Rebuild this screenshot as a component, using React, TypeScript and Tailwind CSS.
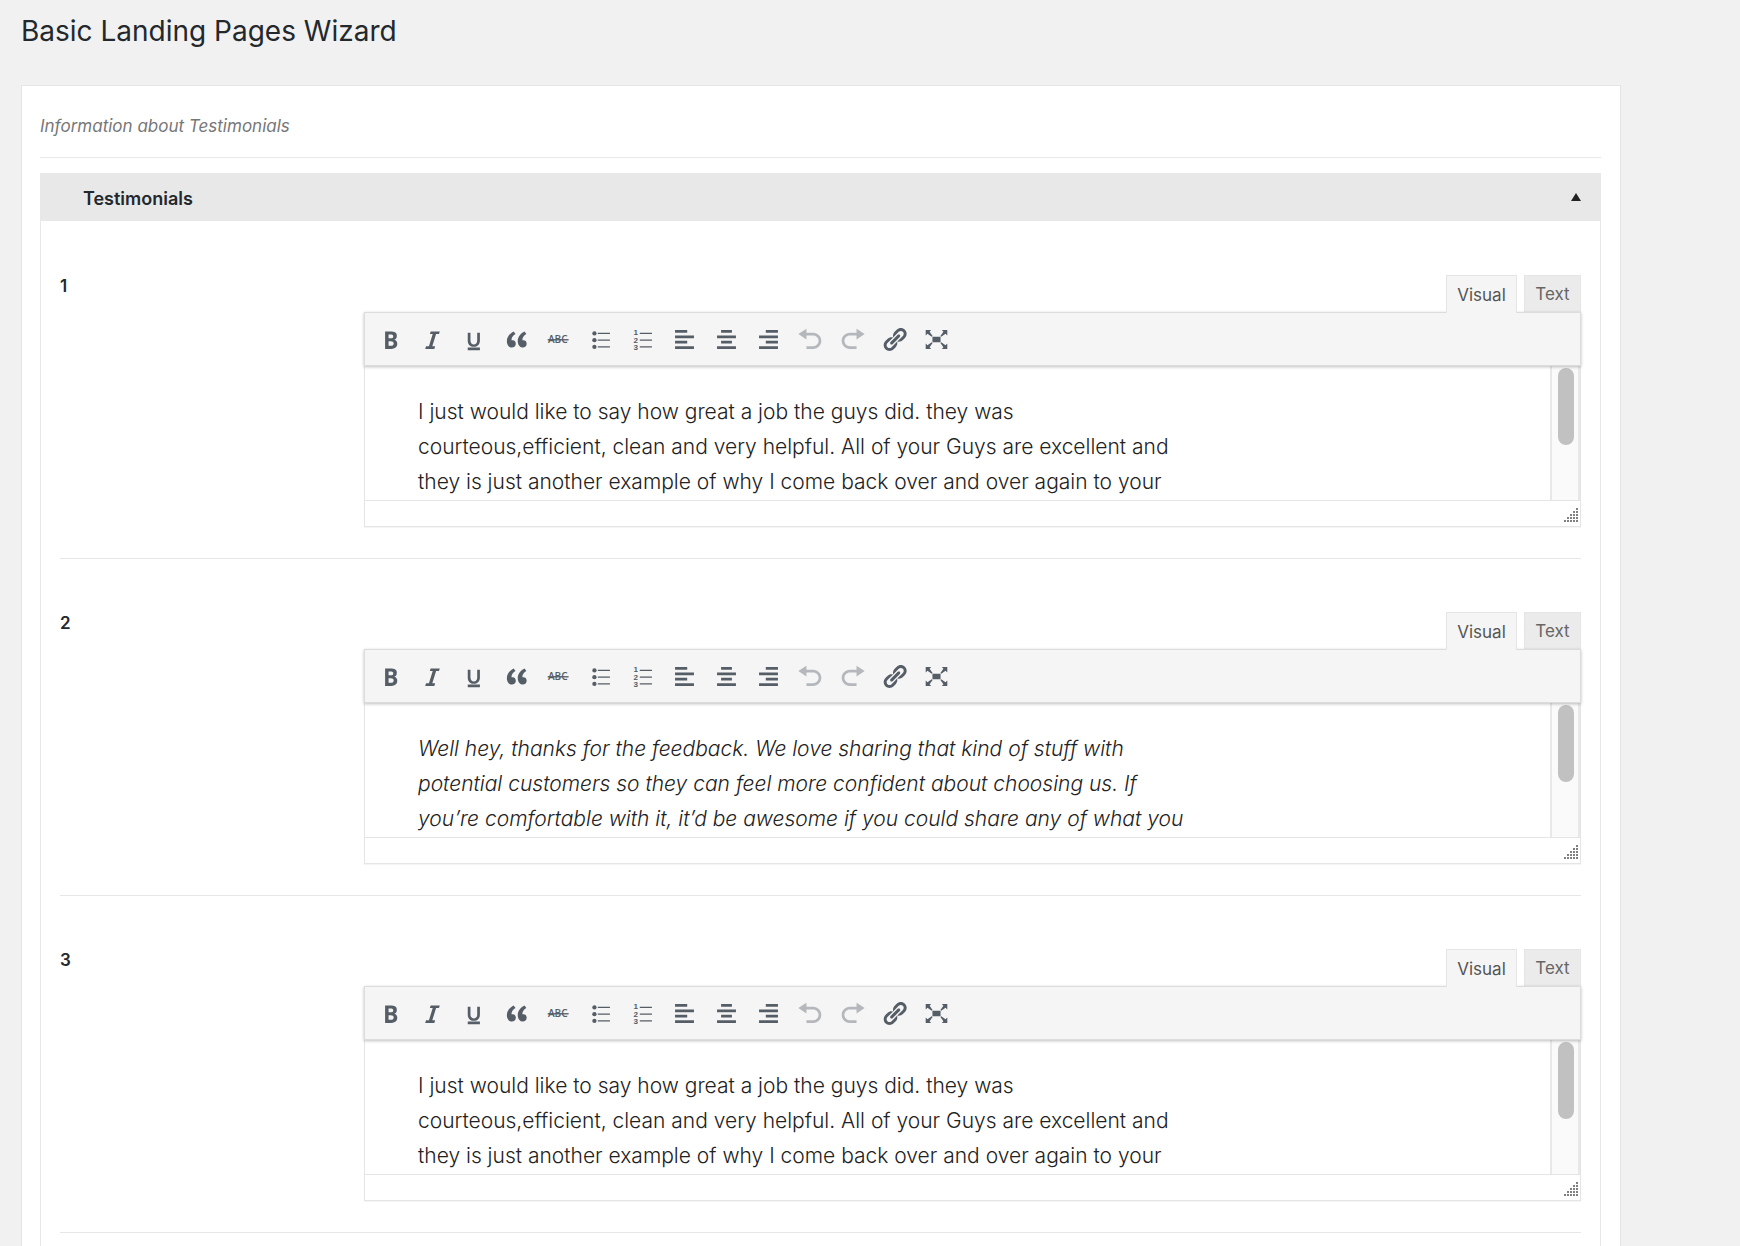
import React from "react";

function Icon({ children }: { children: React.ReactNode }) {
  return (
    <svg viewBox="0 0 20 20" className="h-[27px] w-[27px] fill-current" aria-hidden="true">
      {children}
    </svg>
  );
}

const tools: { label: string; disabled?: boolean; icon: React.ReactNode }[] = [
  {
    label: "Bold",
    icon: <path d="M6 4v13h4.54c1.37 0 2.46-.33 3.26-1 .8-.66 1.2-1.58 1.2-2.77 0-.84-.17-1.51-.51-2.01s-.9-.85-1.67-1.03v-.09c.57-.1 1.02-.4 1.36-.9s.51-1.13.51-1.91c0-1.14-.39-1.98-1.17-2.5C12.75 4.26 11.5 4 9.78 4H6zm2.57 5.15V6.26h1.36c.73 0 1.27.11 1.61.32.34.22.51.58.51 1.07 0 .54-.16.92-.47 1.15s-.82.35-1.51.35h-1.5zm0 2.19h1.6c1.44 0 2.16.53 2.16 1.61 0 .6-.17 1.05-.51 1.34s-.86.43-1.57.43H8.57v-3.38z" />,
  },
  { label: "Italic", icon: <path d="M14.78 6h-2.13l-2.8 9h2.12l-.62 2H4.6l.62-2h2.14l2.8-9H8.03l.62-2h6.75z" /> },
  {
    label: "Underline",
    icon: <path d="M14 5h-2v5.71c0 1.99-1.12 2.98-2.45 2.98-1.32 0-2.55-1-2.55-2.96V5H5v5.87c0 1.91 1 4.54 4.48 4.54 3.49 0 4.52-2.58 4.52-4.5V5zm0 13v-2H5v2h9z" />,
  },
  {
    label: "Blockquote",
    icon: <path d="M9.49 13.22c0-.74-.2-1.38-.61-1.9-.62-.78-1.83-.88-2.53-.72-.29-1.65 1.11-3.75 2.92-4.65L7.88 4c-2.73 1.3-5.42 4.28-4.96 8.05C3.21 14.43 4.59 16 6.54 16c.85 0 1.56-.25 2.12-.75s.83-1.18.83-2.03zm8.05 0c0-.74-.2-1.38-.61-1.9-.63-.78-1.83-.88-2.53-.72-.29-1.65 1.11-3.75 2.92-4.65L15.93 4c-2.73 1.3-5.41 4.28-4.95 8.05.29 2.38 1.66 3.95 3.61 3.95.85 0 1.56-.25 2.12-.75s.83-1.18.83-2.03z" />,
  },
  {
    label: "Strikethrough",
    icon: (
      <>
        <text x="9.500" y="12.900" textAnchor="middle" fontSize="7.500" fontWeight="600" fontFamily="Open Sans, sans-serif">ABC</text>
        <path d="M2 9.700h15.500v1H2z" />
      </>
    ),
  },
  {
    label: "Bulleted list",
    icon: (
      <>
        <circle cx="5.500" cy="5.500" r="1.600" />
        <circle cx="5.500" cy="10.500" r="1.600" />
        <circle cx="5.500" cy="15.500" r="1.600" />
        <path d="M8 5h9v1H8zM8 10h9v1H8zM8 15h9v1H8z" />
      </>
    ),
  },
  {
    label: "Numbered list",
    icon: (
      <>
        <g fontSize="6" fontWeight="600" fontFamily="Liberation Sans, sans-serif">
          <text x="3.300" y="7">1</text>
          <text x="3.300" y="12.300">2</text>
          <text x="3.300" y="17.600">3</text>
        </g>
        <path d="M8 5h9v1H8zM8 10h9v1H8zM8 15h9v1H8z" />
      </>
    ),
  },
  { label: "Align left", icon: <path d="M12 5V3H3v2h9zm5 4V7H3v2h14zm-5 4v-2H3v2h9zm5 4v-2H3v2h14z" /> },
  { label: "Align center", icon: <path d="M14 5V3H6v2h8zm3 4V7H3v2h14zm-3 4v-2H6v2h8zm3 4v-2H3v2h14z" /> },
  { label: "Align right", icon: <path d="M17 5V3H8v2h9zm0 4V7H3v2h14zm0 4v-2H8v2h9zm0 4v-2H3v2h14z" /> },
  {
    label: "Undo",
    disabled: true,
    icon: <path d="M12 5H7V2L1 6l6 4V7h5c2.2 0 4 1.8 4 4s-1.8 4-4 4H7v2h5c3.3 0 6-2.7 6-6s-2.7-6-6-6z" />,
  },
  {
    label: "Redo",
    disabled: true,
    icon: <path d="M8 5h5V2l6 4-6 4V7H8c-2.2 0-4 1.8-4 4s1.8 4 4 4h5v2H8c-3.3 0-6-2.7-6-6s2.7-6 6-6z" />,
  },
  {
    label: "Insert link",
    icon: <path d="M17.74 2.76c1.68 1.69 1.68 4.41 0 6.1l-1.53 1.52c-1.12 1.12-2.7 1.47-4.14 1.09l2.62-2.61.76-.77.76-.76c.84-.84.84-2.2 0-3.04-.84-.85-2.2-.85-3.04 0l-.77.76-3.38 3.38c-.37-1.44-.02-3.02 1.1-4.14l1.52-1.53c1.69-1.68 4.42-1.68 6.1 0zM8.59 13.43l5.34-5.34c.42-.42.42-1.1 0-1.52-.44-.43-1.13-.39-1.53 0l-5.33 5.34c-.42.42-.42 1.1 0 1.52.44.43 1.13.39 1.52 0zm-.76 2.29l4.14-4.15c.38 1.44.03 3.02-1.09 4.14l-1.52 1.53c-1.69 1.68-4.41 1.68-6.1 0-1.68-1.68-1.68-4.42 0-6.1l1.53-1.52c1.12-1.12 2.7-1.47 4.14-1.1l-4.14 4.15c-.85.84-.85 2.2 0 3.05.84.84 2.2.84 3.04 0z" />,
  },
  {
    label: "Fullscreen",
    icon: (
      <>
        <path d="M7 8h6v4H7zM2 3h4L4.900 4.200 7.100 7.400 6.500 8 3.300 5.800 2 7zM18 3h-4l1.100 1.200L12.900 7.400l.6.6 3.200-2.200L18 7zM2 17h4l-1.100-1.200L7.100 12.600l-.6-.6-3.200 2.200L2 13zM18 17h-4l1.100-1.200-2.200-3.200.6-.6 3.200 2.200L18 13z" />
      </>
    ),
  },
];

function ResizeHandle() {
  const dots: [number, number][] = [];
  for (let row = 0; row < 5; row++) {
    for (let col = 4 - row; col < 5; col++) dots.push([col, row]);
  }
  return (
    <svg viewBox="0 0 14 14" className="h-[14px] w-[14px] fill-[#808080]" aria-hidden="true">
      {dots.map(([c, r]) => (
        <rect key={`${c}-${r}`} x={c * 3} y={r * 3} width="2" height="2" />
      ))}
    </svg>
  );
}

function Editor({ number, italic, children }: { number: number; italic?: boolean; children: React.ReactNode }) {
  return (
    <section className="flex border-b border-[#e7e7e7] pt-[53px] pb-[31px]">
      <h3 id={`item-${number}`} className="w-[304px] shrink-0 text-[17px] leading-[22px] font-semibold">
        {number}
      </h3>
      <div className="min-w-0 flex-1">
        <div className="flex items-start justify-end gap-[7px] text-[17px] leading-6">
          <button className="relative z-10 -mb-px h-[38px] w-[71px] border border-b-0 border-[#e5e5e5] bg-[#f5f5f5] text-[#555]">
            Visual
          </button>
          <button className="h-[37px] w-[57px] border border-b-0 border-[#e5e5e5] bg-[#ebebeb] text-[#666]">Text</button>
        </div>
        <div className="border border-[#e5e5e5] shadow-[0_1px_1px_rgba(0,0,0,0.04)]">
          <div
            role="toolbar"
            aria-label="Formatting"
            className="relative -mx-px -mt-px flex h-[54px] items-center border border-[#dcdcdc] bg-[#f5f5f5] px-1 text-[#555d66] shadow-[0_1px_3px_rgba(0,0,0,0.25)]"
          >
            {tools.map((t) => (
              <button
                key={t.label}
                aria-label={t.label}
                disabled={t.disabled}
                className="flex h-9 w-[42px] items-center justify-center disabled:opacity-40"
              >
                <Icon>{t.icon}</Icon>
              </button>
            ))}
          </div>
          <div className="flex h-[134px] overflow-hidden">
            <div
              role="textbox"
              aria-multiline="true"
              aria-labelledby={`item-${number}`}
              className="min-w-0 flex-1 pt-7 pl-[53px] text-[21px] leading-[35px] font-light text-[#222]"
            >
              <p className={italic ? "italic" : ""}>{children}</p>
            </div>
            <div className="w-[30px] border-x-2 border-[#e8e8e8] bg-[#fafafa] pt-[2px] pl-[6px]">
              <div className="h-[77px] w-4 rounded-full bg-[#c1c1c1]" />
            </div>
          </div>
          <div className="flex h-[26px] items-end justify-end border-t border-[#e5e5e5] pr-[2px] pb-1">
            <ResizeHandle />
          </div>
        </div>
      </div>
    </section>
  );
}

function PlainQuote() {
  return (
    <>
      I just would like to say how great a job the guys did. they was
      <br />
      courteous,efficient, clean and very helpful. All of your Guys are excellent and
      <br />
      they is just another example of why I come back over and over again to your
    </>
  );
}

export default function App() {
  return (
    <main className="h-screen overflow-hidden bg-[#f1f1f1] pr-[119px] pl-[21px] font-['Inter',sans-serif] text-[#23282d]">
      <h1 className="pt-[11px] text-[28px] leading-10">Basic Landing Pages Wizard</h1>
      <div className="mt-[34px] border border-[#e5e5e5] bg-white pt-7 pr-[19px] pl-[18px] shadow-[0_1px_1px_rgba(0,0,0,0.04)]">
        <p className="border-b border-[#e7e7e7] pb-[19px] text-[17px] leading-6 text-[#777] italic">
          Information about Testimonials
        </p>
        <div className="mt-[15px] border-x border-[#e8e8e8]">
          <button className="-mx-px flex h-12 w-[calc(100%+2px)] items-center justify-between bg-[#e8e8e8] pr-5 pl-[43px]">
            <span className="pt-[3px] text-[18px] leading-6 font-semibold">Testimonials</span>
            <svg viewBox="0 0 10 8" className="h-2 w-[10px] fill-[#222]" aria-hidden="true">
              <path d="M5 0l5 8H0z" />
            </svg>
          </button>
          <div className="px-[19px] pt-px pb-16">
            <Editor number={1}>
              <PlainQuote />
            </Editor>
            <Editor number={2} italic>
              Well hey, thanks for the feedback. We love sharing that kind of stuff with
              <br />
              potential customers so they can feel more confident about choosing us. If
              <br />
              you’re comfortable with it, it’d be awesome if you could share any of what you
            </Editor>
            <Editor number={3}>
              <PlainQuote />
            </Editor>
          </div>
        </div>
      </div>
    </main>
  );
}
